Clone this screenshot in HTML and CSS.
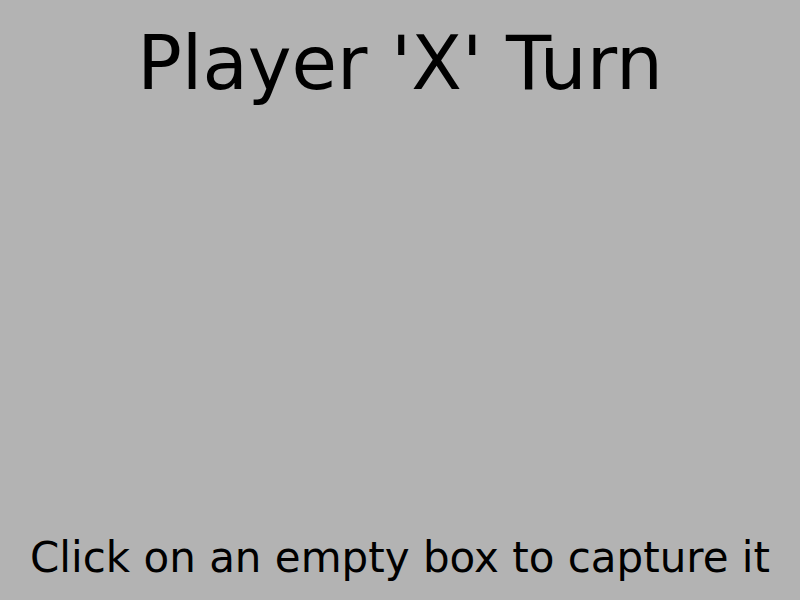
FILE: index.html
```html
<!DOCTYPE html>
<html lang="en">
<head>
<meta charset="utf-8">
<title>Tic-Tac-Toe</title>
<link rel="stylesheet" href="styles.css">
</head>
<body>
<main class="game">
<h1 class="turn">Player 'X' Turn</h1>
<p class="hint">Click on an empty box to capture it</p>
</main>
</body>
</html>
```

FILE: styles.css
```css
body {
  margin: 0;
  background: #b3b3b3;
  color: #000;
  font-family: Verdana, "DejaVu Sans", sans-serif;
}

.game {
  box-sizing: border-box;
  min-height: 100vh;
  padding: 18px 0;
  display: flex;
  flex-direction: column;
  justify-content: space-between;
  text-align: center;
}

.turn,
.hint {
  margin: 0;
  font-weight: 400;
  white-space: nowrap;
}

.turn {
  font-size: 74px;
  line-height: 90px;
}

.hint {
  font-size: 42px;
  line-height: 48px;
}
```
